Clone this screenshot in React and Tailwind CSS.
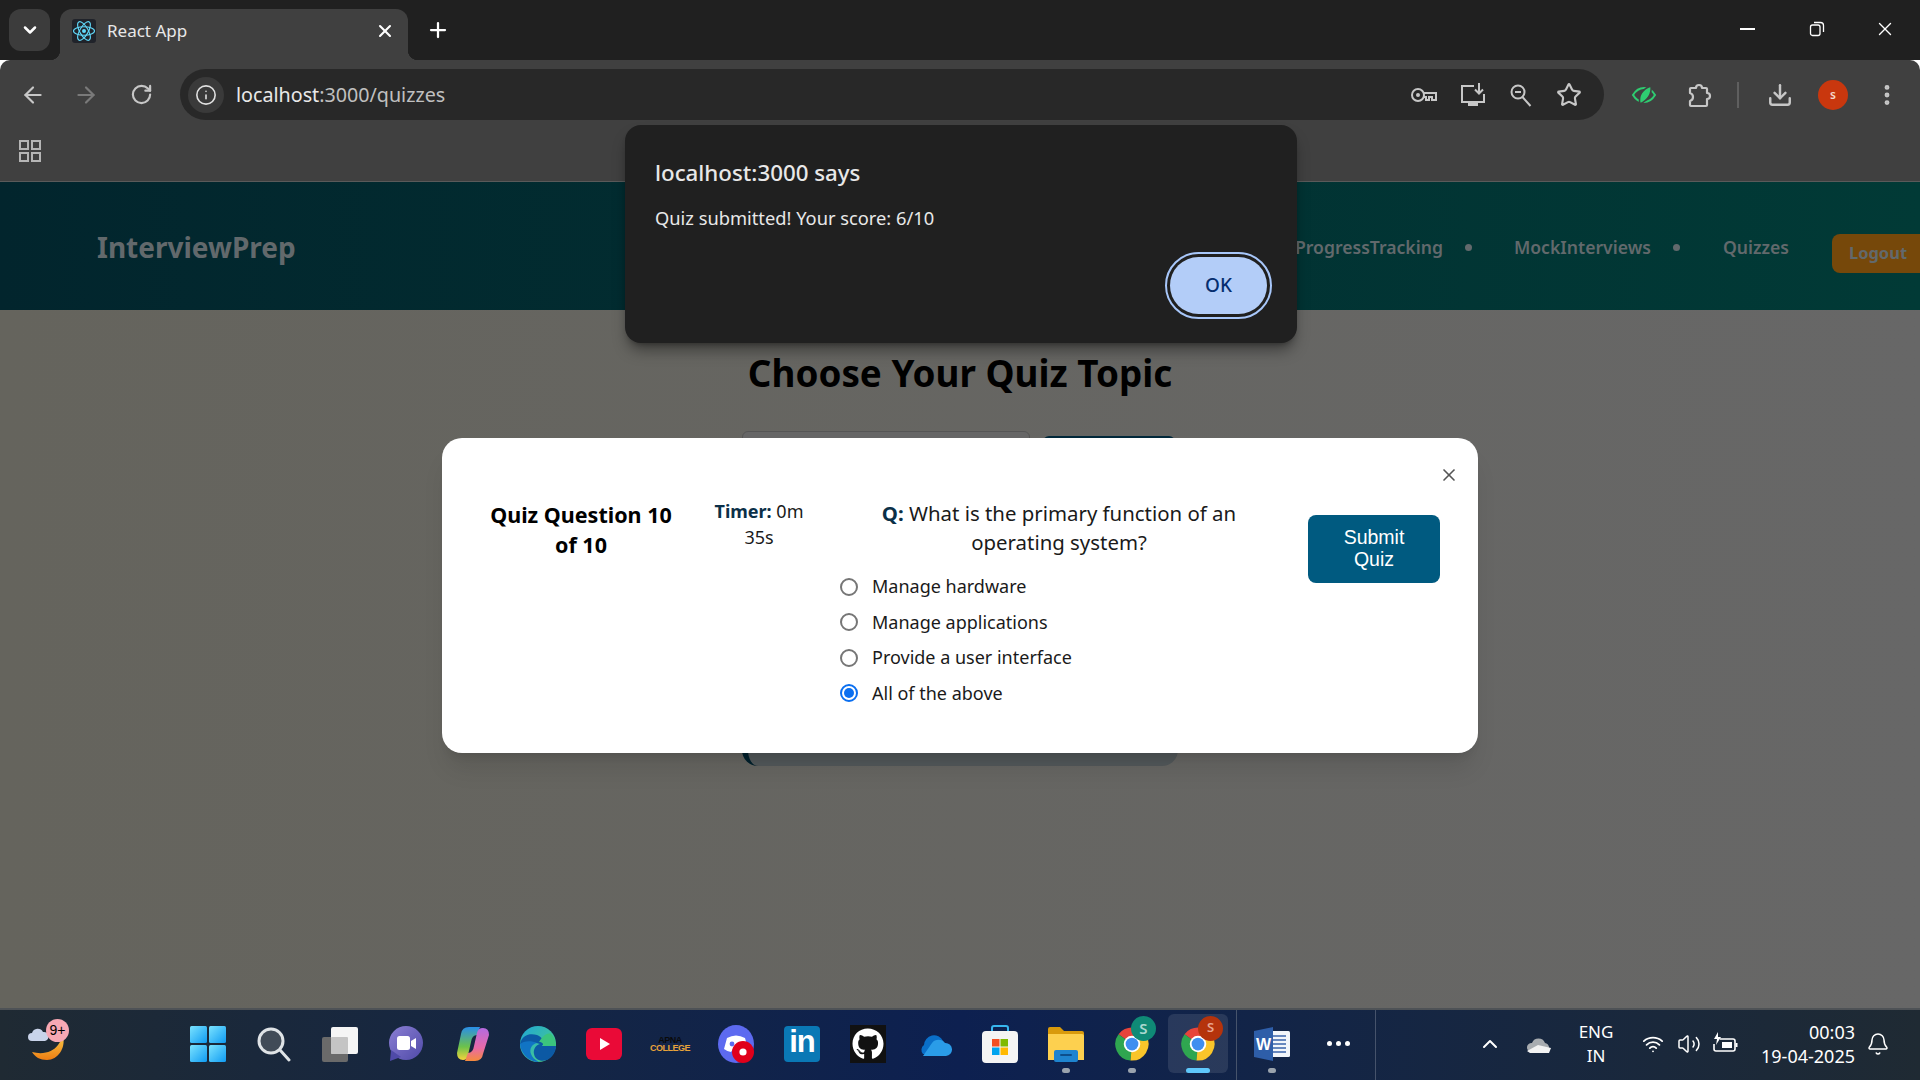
import {
  ArrowLeft,
  ArrowRight,
  Bell,
  ChevronDown,
  ChevronUp,
  Download,
  Info,
  MoreVertical,
  Plus,
  RotateCw,
  Star,
  Volume2,
  Wifi,
  X,
} from "lucide-react";
import { FaGithub } from "react-icons/fa";

function ReactIcon() {
  return (
    <div className="w-6 h-6 bg-[#20232a] rounded-[3px] flex items-center justify-center">
      <svg viewBox="0 0 24 24" className="w-6 h-6" fill="none" stroke="#61dafb" strokeWidth="1.1">
        <ellipse cx="12" cy="12" rx="10.5" ry="4.2" />
        <ellipse cx="12" cy="12" rx="10.5" ry="4.2" transform="rotate(60 12 12)" />
        <ellipse cx="12" cy="12" rx="10.5" ry="4.2" transform="rotate(120 12 12)" />
        <circle cx="12" cy="12" r="2" fill="#61dafb" stroke="none" />
      </svg>
    </div>
  );
}

function KeyIcon() {
  return (
    <svg viewBox="0 0 28 20" className="w-7 h-5" fill="none" stroke="#c7c7c7" strokeWidth="2">
      <circle cx="8" cy="10" r="6" />
      <circle cx="8" cy="10" r="2" fill="#c7c7c7" stroke="none" />
      <path d="M14 8h12v7h-4v-3h-3v3h-3v-3h-2" />
    </svg>
  );
}

function MonitorIcon() {
  return (
    <svg viewBox="0 0 26 26" className="w-[26px] h-[26px]" fill="none" stroke="#c7c7c7" strokeWidth="2">
      <path d="M14 4H2v16h22v-8" />
      <path d="M19 1v10M15 7.5l4 4 4-4" />
      <path d="M8 24h10v-3H8z" fill="#c7c7c7" stroke="none" />
    </svg>
  );
}

function ZoomIcon() {
  return (
    <svg viewBox="0 0 24 24" className="w-6 h-6" fill="none" stroke="#c7c7c7" strokeWidth="2">
      <circle cx="9" cy="9" r="6.5" />
      <path d="M6 9h6M13.5 14l8 9" />
    </svg>
  );
}

function PuzzleIcon() {
  return (
    <svg viewBox="0 0 26 26" className="w-[26px] h-[26px]" fill="none" stroke="#c7c7c7" strokeWidth="2.2" strokeLinejoin="round">
      <path d="M5 6h5a3 3 0 0 1 6 0h4a1 1 0 0 1 1 1v4a3 3 0 0 1 0 6v6a1 1 0 0 1-1 1H5a1 1 0 0 1-1-1v-4q3-1 3-4t-3-4V7a1 1 0 0 1 1-1z" />
    </svg>
  );
}

function EyeLeaf() {
  return (
    <svg viewBox="0 0 26 22" className="w-[26px] h-[22px]" fill="none" stroke="#2ecc71" strokeWidth="2">
      <path d="M2 11c3-5 7-7 11-7s8 2 11 7c-3 5-7 7-11 7S5 16 2 11z" />
      <path d="M9 20C7 12 11 5 20 2c1 8-3 14-11 18z" fill="#2ecc71" stroke="#404040" strokeWidth="1.5" />
    </svg>
  );
}

function RestoreIcon() {
  return (
    <svg viewBox="0 0 16 16" className="w-4 h-4" fill="none" stroke="#fff" strokeWidth="1.3">
      <rect x="1.5" y="4" width="9.5" height="10.5" rx="2" />
      <path d="M5 1.5h6.5a3 3 0 0 1 3 3V11" />
    </svg>
  );
}

function WinIcon() {
  return (
    <svg viewBox="0 0 36 36" className="w-9 h-9">
      <defs>
        <linearGradient id="win" x1="0" y1="0" x2="1" y2="1">
          <stop offset="0" stopColor="#7be3ff" />
          <stop offset="1" stopColor="#0f9bf2" />
        </linearGradient>
      </defs>
      <rect x="0" y="0" width="17" height="17" rx="1.5" fill="url(#win)" />
      <rect x="19" y="0" width="17" height="17" rx="1.5" fill="url(#win)" />
      <rect x="0" y="19" width="17" height="17" rx="1.5" fill="url(#win)" />
      <rect x="19" y="19" width="17" height="17" rx="1.5" fill="url(#win)" />
    </svg>
  );
}

function SearchIcon() {
  return (
    <svg viewBox="0 0 36 36" className="w-9 h-9" fill="#414b57" stroke="#dfe3e6" strokeWidth="3">
      <circle cx="15" cy="15" r="12" />
      <path d="M24 24l9 10" strokeLinecap="round" fill="none" />
    </svg>
  );
}

function TaskViewIcon() {
  return (
    <svg viewBox="0 0 36 36" className="w-9 h-9">
      <rect x="0" y="11" width="26" height="25" rx="2" fill="#6a6a6a" />
      <rect x="9" y="1" width="27" height="27" rx="2" fill="#f5f5f5" />
      <rect x="9" y="11" width="17" height="17" rx="1" fill="#c4c4c4" />
    </svg>
  );
}

function TeamsIcon() {
  return (
    <svg viewBox="0 0 36 36" className="w-9 h-9">
      <defs>
        <linearGradient id="teams" x1="0" y1="0" x2="1" y2="1">
          <stop offset="0" stopColor="#8b7fd4" />
          <stop offset="1" stopColor="#4f4aa8" />
        </linearGradient>
      </defs>
      <circle cx="18" cy="17" r="17" fill="url(#teams)" />
      <path d="M3 24l-1 11 11-4z" fill="#4f4aa8" />
      <rect x="9" y="10" width="13" height="14" rx="2.5" fill="#fff" />
      <path d="M23 15l5-3v11l-5-3z" fill="#fff" />
    </svg>
  );
}

function CopilotIcon() {
  return (
    <svg viewBox="0 0 36 36" className="w-9 h-9">
      <defs>
        <linearGradient id="cop1" x1="0" y1="0" x2="0" y2="1">
          <stop offset="0" stopColor="#2a8ee8" />
          <stop offset="0.6" stopColor="#6cc24a" />
          <stop offset="1" stopColor="#f5d33c" />
        </linearGradient>
        <linearGradient id="cop2" x1="0" y1="0" x2="0" y2="1">
          <stop offset="0" stopColor="#b56ae0" />
          <stop offset="0.6" stopColor="#e86aa8" />
          <stop offset="1" stopColor="#f58b3c" />
        </linearGradient>
      </defs>
      <path d="M7 8Q8 1 15 1h11l-3 8q-5 0-6 7l-3 13q-1 5-5 5-6 0-6-7z" fill="url(#cop1)" />
      <path d="M29 28q-1 7-8 7H11l3-8q5 0 6-7l3-13q1-5 6-5 6 0 6 7z" fill="url(#cop2)" />
    </svg>
  );
}

function EdgeIcon() {
  return (
    <svg viewBox="0 0 36 36" className="w-9 h-9">
      <defs>
        <linearGradient id="edge" x1="0" y1="0" x2="1" y2="1">
          <stop offset="0" stopColor="#1fa6d8" />
          <stop offset="1" stopColor="#51d27a" />
        </linearGradient>
      </defs>
      <circle cx="18" cy="18" r="18" fill="url(#edge)" />
      <path d="M0 18C2 8 11 7 17 9c6 2 8 8 5 11H36c0 6-4 12-9 14-6 2-12 0-13-6-1-5 2-9 6-10-7-3-15 0-20 0z" fill="#0c59a4" />
      <path d="M17 17c-5 1-8 6-6 11 1 3 4 6 8 8C9 36 1 28 0 18c3-3 11-4 17-1z" fill="#1174c4" />
      <path d="M19 16c3 0 5 2 4 4H36c0-5-2-9-5-12-4-2-9 3-12 8z" fill="#3bc47d" />
    </svg>
  );
}

function YoutubeIcon() {
  return (
    <svg viewBox="0 0 36 32" className="w-9 h-8">
      <rect x="0" y="0" width="36" height="32" rx="6" fill="#ea0a37" />
      <path d="M14 10l10 6-10 6z" fill="#fff" />
    </svg>
  );
}

function ApnaIcon() {
  return (
    <div className="flex flex-col items-center font-['Liberation_Sans',sans-serif] font-bold leading-[8px]">
      <span className="text-[9px] text-[#0a0a0a] tracking-[-0.5px]">APNA</span>
      <span className="text-[9px] text-[#e8a33a] tracking-[-0.5px]">COLLEGE</span>
    </div>
  );
}

function DiscordIcon() {
  return (
    <svg viewBox="0 0 36 38" className="w-9 h-[38px]">
      <ellipse cx="18" cy="19" rx="18" ry="19" fill="#5d6af0" />
      <path d="M9 13q9-5 18 0l3 11q-4 3-7 3l-2-3h-6l-2 3q-3 0-7-3z" fill="#fff" />
      <circle cx="14" cy="19" r="2.4" fill="#5d6af0" />
      <circle cx="25" cy="27" r="11" fill="#e0001b" />
      <circle cx="25" cy="27" r="3.6" fill="#fff" />
    </svg>
  );
}

function LinkedinIcon() {
  return (
    <div className="w-9 h-9 rounded-[4px] bg-[#0a78b5] flex items-center justify-center text-white font-bold text-[31px] leading-none font-['Liberation_Sans',sans-serif] tracking-[-1px] pb-1">
      in
    </div>
  );
}

function GithubIcon() {
  return (
    <div className="w-9 h-[38px] bg-[#111] flex items-center justify-center">
      <FaGithub className="w-8 h-8 text-white" />
    </div>
  );
}

function OnedriveIcon() {
  return (
    <svg viewBox="0 0 36 24" className="w-9 h-6">
      <path d="M8 13a10 10 0 0 1 19-4l-13 13H7a6 6 0 0 1 1-9z" fill="#0a6fc9" />
      <path d="M16 11a8 8 0 0 1 13 0 6.5 6.5 0 0 1 1 13H7z" fill="#2a9ce8" />
    </svg>
  );
}

function StoreIcon() {
  return (
    <svg viewBox="0 0 36 38" className="w-9 h-[38px]">
      <path d="M10 7V3q0-2 2-2h12q2 0 2 2v4" fill="none" stroke="#37b6ee" strokeWidth="2" />
      <rect x="0" y="6" width="36" height="32" rx="4" fill="#f4f4f4" />
      <rect x="10" y="14" width="7.5" height="7.5" fill="#f25022" />
      <rect x="18.5" y="14" width="7.5" height="7.5" fill="#7fba00" />
      <rect x="10" y="22.5" width="7.5" height="7.5" fill="#00a4ef" />
      <rect x="18.5" y="22.5" width="7.5" height="7.5" fill="#ffb900" />
    </svg>
  );
}

function FilesIcon() {
  return (
    <svg viewBox="0 0 36 36" className="w-9 h-9">
      <path d="M0 3q0-2 2-2h10l4 4h18q2 0 2 2v3H0z" fill="#d99a0c" />
      <path d="M0 8h34q2 0 2 2v24H0z" fill="#fdd04f" />
      <rect x="6" y="24" width="24" height="12" rx="2" fill="#1e84cf" />
      <rect x="12" y="28" width="12" height="2" rx="1" fill="#0d4f8c" />
    </svg>
  );
}

function ChromeIcon() {
  return (
    <svg viewBox="0 0 48 48" className="w-9 h-9">
      <path d="M24 24L6 11A22 22 0 0 1 43 13z" fill="#e6443b" />
      <path d="M24 24L6 11A22 22 0 0 0 22 46z" fill="#2fa650" />
      <path d="M24 24L43 13A22 22 0 0 1 22 46z" fill="#f9c52a" />
      <circle cx="24" cy="24" r="11" fill="#fff" />
      <circle cx="24" cy="24" r="8.5" fill="#3f8ef0" />
    </svg>
  );
}

function WordIcon() {
  return (
    <svg viewBox="0 0 36 34" className="w-9 h-[34px]">
      <rect x="14" y="4" width="22" height="26" rx="1.5" fill="#f2f5fa" />
      <path d="M19 9h13M19 13h13M19 17h13M19 21h13M19 25h13" stroke="#3a63ab" strokeWidth="1.5" />
      <path d="M0 4L19 0v34L0 30z" fill="#2e5ea9" />
      <text x="2" y="23" fontSize="16" fontWeight="700" fill="#fff" fontFamily="Liberation Sans">W</text>
    </svg>
  );
}

function WeatherIcon() {
  return (
    <div className="relative w-[44px] h-[44px]">
      <svg viewBox="0 0 44 44" className="w-11 h-11">
        <defs>
          <linearGradient id="moon" x1="0" y1="0" x2="0" y2="1">
            <stop offset="0" stopColor="#f7c948" />
            <stop offset="1" stopColor="#ee7d12" />
          </linearGradient>
        </defs>
        <path d="M37 14c3 12-5 24-16 24-7 0-12-3-15-8 11 3 21 0 26-7q3-4 5-9z" fill="url(#moon)" />
        <path d="M6 19a4 4 0 0 1 0-8 6 6 0 0 1 11-1 4.5 4.5 0 0 1 2 9z" fill="#c9d4ea" />
      </svg>
      <div className="absolute left-[20px] top-[-3px] w-[23px] h-[23px] rounded-full bg-[#f7a8b4] flex items-center justify-center text-[14px] text-black font-['Liberation_Sans',sans-serif] leading-none">
        9+
      </div>
    </div>
  );
}

function TrayCloud() {
  return (
    <svg viewBox="0 0 26 18" className="w-[26px] h-[18px]">
      <path d="M6 8a7 7 0 0 1 13 0 5 5 0 0 1 2 9H5a4.5 4.5 0 0 1 1-9z" fill="#a8acb0" />
      <path d="M1 16l11-6 13 3-2 5H4z" fill="#f2f2f2" />
    </svg>
  );
}

function BatteryIcon() {
  return (
    <svg viewBox="0 0 26 24" className="w-[26px] h-6" fill="none" stroke="#fff" strokeWidth="1.6">
      <path d="M8 7h13a2 2 0 0 1 2 2v8a2 2 0 0 1-2 2H4a2 2 0 0 1-2-2v-5" />
      <rect x="10" y="10" width="10" height="6" fill="#fff" stroke="none" />
      <path d="M23.5 11h2v4h-2z" fill="#fff" stroke="none" />
      <path d="M6 0L2 7h3l-1 6 5-8H6z" fill="#fff" stroke="none" />
    </svg>
  );
}

function AppSlot({ children, running, active, badge }) {
  return (
    <div className="relative w-[66px] h-[70px] flex items-center justify-center pb-[3px]">
      {active && <div className="absolute left-[3px] right-[3px] top-[4px] bottom-[7px] rounded-md bg-white/10" />}
      <div className="relative">
        {children}
        {badge}
      </div>
      {running && <div className="absolute bottom-[7px] w-2 h-[5px] rounded-full bg-[#9aa3ad]" />}
      {active && <div className="absolute bottom-[7px] w-6 h-[5px] rounded-full bg-[#5fc8fb]" />}
    </div>
  );
}

function Taskbar() {
  const sBadge = (
    <div className="absolute -right-[6px] -top-[10px] w-[25px] h-[25px] rounded-full bg-[#0f8a76] flex items-center justify-center text-[15px] text-[#a9d8cf] font-semibold">
      S
    </div>
  );
  const redBadge = (
    <div className="absolute -right-[7px] -top-[10px] w-[25px] h-[25px] rounded-full bg-[#b5330c] flex items-center justify-center text-[13px] text-[#e8a590] font-semibold">
      S
    </div>
  );
  return (
    <div className="h-[72px] shrink-0 flex border-t-2 border-[#4e5256] bg-linear-to-r from-[#1f2a33] via-[#0d2050] via-50% to-[#1f2a33] text-white">
      <div className="w-[175px] pl-[26px] pb-[3px] flex items-center">
        <WeatherIcon />
      </div>
      <AppSlot><WinIcon /></AppSlot>
      <AppSlot><SearchIcon /></AppSlot>
      <AppSlot><TaskViewIcon /></AppSlot>
      <AppSlot><TeamsIcon /></AppSlot>
      <AppSlot><CopilotIcon /></AppSlot>
      <AppSlot><EdgeIcon /></AppSlot>
      <AppSlot><YoutubeIcon /></AppSlot>
      <AppSlot><ApnaIcon /></AppSlot>
      <AppSlot><DiscordIcon /></AppSlot>
      <AppSlot><LinkedinIcon /></AppSlot>
      <AppSlot><GithubIcon /></AppSlot>
      <AppSlot><OnedriveIcon /></AppSlot>
      <AppSlot><StoreIcon /></AppSlot>
      <AppSlot running><FilesIcon /></AppSlot>
      <AppSlot running badge={sBadge}><ChromeIcon /></AppSlot>
      <AppSlot active badge={redBadge}><ChromeIcon /></AppSlot>
      <div className="ml-[5px] mr-[2px] w-px bg-[#46536b]" />
      <AppSlot running><WordIcon /></AppSlot>
      <div className="w-[66px] pb-[3px] flex items-center justify-center gap-[4px]">
        <span className="w-[5px] h-[5px] rounded-full bg-white" />
        <span className="w-[5px] h-[5px] rounded-full bg-white" />
        <span className="w-[5px] h-[5px] rounded-full bg-white" />
      </div>
      <div className="ml-[4px] w-px bg-[#46536b]" />
      <div className="ml-auto mr-[19px] flex items-center pb-[2px]">
        <div className="w-[48px] flex justify-center"><ChevronUp className="w-6 h-6" strokeWidth={2} /></div>
        <div className="w-[50px] flex justify-center"><TrayCloud /></div>
        <div className="w-[64px] text-center text-[17px] leading-[24px]">
          <div>ENG</div>
          <div>IN</div>
        </div>
        <div className="w-[50px] flex justify-center"><Wifi className="w-[22px] h-[22px]" /></div>
        <div className="w-[22px] flex justify-center"><Volume2 className="w-6 h-6 shrink-0" strokeWidth={1.5} /></div>
        <div className="w-[50px] flex justify-center"><BatteryIcon /></div>
        <div className="w-[105px] text-right text-[18px] leading-[24px]">
          <div>00:03</div>
          <div>19-04-2025</div>
        </div>
        <div className="w-[46px] flex justify-center"><Bell className="w-6 h-6" strokeWidth={1.5} /></div>
      </div>
    </div>
  );
}

function TabStrip() {
  return (
    <div className="h-[60px] shrink-0 bg-[#202020] flex relative text-white">
      <div className="mt-[9px] ml-[9px] w-[41px] h-[42px] rounded-xl bg-[#3c3c3c] flex items-center justify-center">
        <ChevronDown className="w-5 h-5" strokeWidth={3} />
      </div>
      <div className="relative mt-[9px] ml-[10px] w-[348px] h-[51px] rounded-t-[12px] bg-[#404040] flex items-center pl-[12px] pb-2">
        <div className="absolute -left-[10px] bottom-0 w-[10px] h-[10px] bg-[radial-gradient(circle_at_0_0,#202020_10px,#404040_10.5px)]" />
        <div className="absolute -right-[10px] bottom-0 w-[10px] h-[10px] bg-[radial-gradient(circle_at_100%_0,#202020_10px,#404040_10.5px)]" />
        <ReactIcon />
        <span className="ml-[11px] text-[17px] text-[#e8e8e8]">React App</span>
        <X className="absolute right-[13px] top-[12px] w-5 h-5" strokeWidth={2.5} />
      </div>
      <div className="ml-[18px] mt-[18px] h-6">
        <Plus className="w-6 h-6" strokeWidth={2.25} />
      </div>
      <div className="ml-auto mr-[1px] flex items-start">
        <div className="w-[68px] mr-[2px] h-[58px] flex items-center justify-center"><div className="w-[15px] h-[2px] bg-white" /></div>
        <div className="w-[68px] h-[58px] flex items-center justify-center"><RestoreIcon /></div>
        <div className="w-[68px] h-[58px] flex items-center justify-center"><X className="w-[22px] h-[22px]" strokeWidth={1.5} /></div>
      </div>
    </div>
  );
}

function Toolbar() {
  return (
    <div className="h-[61px] shrink-0 bg-[#404040] rounded-t-[10px] flex items-center text-[#c7c7c7] pt-[8px]">
      <div className="ml-[5px] w-[56px] flex justify-center"><ArrowLeft className="w-[26px] h-[26px]" strokeWidth={2} /></div>
      <div className="w-[50px] flex justify-center"><ArrowRight className="w-[26px] h-[26px] text-[#7a7a7a]" strokeWidth={2} /></div>
      <div className="w-[60px] flex justify-center"><RotateCw className="w-[23px] h-[23px]" strokeWidth={2.25} /></div>
      <div className="ml-[9px] flex-1 h-[51px] rounded-full bg-[#282828] flex items-center pl-[8px] pr-[11px]">
        <div className="w-[36px] h-[36px] rounded-full bg-[#3a3a3a] flex items-center justify-center">
          <Info className="w-[22px] h-[22px] text-[#e0e0e0]" strokeWidth={1.75} />
        </div>
        <span className="ml-[12px] text-[19.7px] text-[#e8e8e8]">
          localhost<span className="text-[#c0c0c0]">:3000/quizzes</span>
        </span>
        <div className="ml-auto flex items-center">
          <div className="w-[48px] flex justify-center"><KeyIcon /></div>
          <div className="w-[49px] flex justify-center"><MonitorIcon /></div>
          <div className="w-[48px] flex justify-center"><ZoomIcon /></div>
          <div className="w-[48px] flex justify-center"><Star className="w-[26px] h-[26px]" strokeWidth={2} /></div>
        </div>
      </div>
      <div className="w-[80px] flex justify-center"><EyeLeaf /></div>
      <div className="w-[30px] flex justify-center"><PuzzleIcon /></div>
      <div className="w-[48px] flex justify-center"><div className="w-[2px] h-[26px] bg-[#5f5f5f]" /></div>
      <div className="w-[36px] flex justify-center"><Download className="w-[26px] h-[26px] shrink-0" strokeWidth={2.25} /></div>
      <div className="w-[70px] flex justify-center">
        <div className="w-[30px] h-[30px] rounded-full bg-[#c9370e] flex items-center justify-center text-[12px] text-[#f6d7cc] font-semibold">s</div>
      </div>
      <div className="w-[38px] mr-[14px] flex justify-center"><MoreVertical className="w-[26px] h-[26px]" strokeWidth={2.5} /></div>
    </div>
  );
}

function BookmarksBar() {
  return (
    <div className="h-[61px] shrink-0 bg-[#404040] border-b border-[#5a5a5a] flex items-center pl-[19px] pb-[1px]">
      <svg viewBox="0 0 22 22" className="w-[22px] h-[22px]" fill="none" stroke="#b5b5b5" strokeWidth="2">
        <rect x="1" y="1" width="8" height="8" />
        <rect x="13" y="1" width="8" height="8" />
        <rect x="1" y="13" width="8" height="8" />
        <rect x="13" y="13" width="8" height="8" />
      </svg>
    </div>
  );
}

function NavBar() {
  return (
    <div className="h-[128px] shrink-0 bg-linear-to-r from-[#02252d] to-[#013a36] flex items-center pl-[97px] pt-[2px] overflow-hidden text-[#62696c]">
      <span className="text-[28px] font-bold">InterviewPrep</span>
      <div className="ml-auto flex items-center text-[17.6px] font-semibold pt-[1px]">
        <span>ProgressTracking</span>
        <span className="w-[71px] pl-[22px] flex"><i className="block w-[7px] h-[7px] rounded-full bg-[#62696c]" /></span>
        <span>MockInterviews</span>
        <span className="w-[72px] pl-[22px] flex"><i className="block w-[7px] h-[7px] rounded-full bg-[#62696c]" /></span>
        <span>Quizzes</span>
        <div className="ml-[43px] mt-[12px] w-[88px] h-[39px] rounded-l-lg bg-[#76480a] flex items-center justify-center pl-1 text-[16.5px] font-bold">
          Logout
        </div>
      </div>
    </div>
  );
}

function QuizPage() {
  return (
    <div className="flex-1 bg-linear-to-r from-[#65645d] to-[#676767] flex flex-col items-center min-h-0">
      <h1 className="mt-[37px] h-[52px] text-[36.8px] leading-[52px] font-bold text-black">Choose Your Quiz Topic</h1>
      <div className="mt-[32px] w-[436px] flex gap-[13px] items-start">
        <div className="w-[288px] h-[40px] rounded-md border border-[#555] bg-[#666]" />
        <div className="mt-[5px] w-[132px] h-[36px] rounded-md bg-[#01283a]" />
      </div>
      <div className="mt-[254px] w-[436px] h-[40px] rounded-2xl border-l-[6px] border-[#01202c] bg-[#52585a]" />
    </div>
  );
}

const options = ["Manage hardware", "Manage applications", "Provide a user interface", "All of the above"];

function QuizModal() {
  return (
    <div className="absolute left-[442px] top-[438px] w-[1036px] h-[315px] rounded-[20px] bg-white shadow-xl flex items-start text-[#1a1a1a]">
      <X className="absolute right-[19px] top-[27px] w-5 h-5 text-[#555]" strokeWidth={2} />
      <div className="ml-[40px] mt-[62px] w-[198px] text-center text-[21.5px] leading-[30px] font-bold text-black">
        <div>Quiz Question 10</div>
        <div>of 10</div>
      </div>
      <div className="ml-[30px] mt-[60px] w-[98px] text-center text-[18px] leading-[26px]">
        <div><b className="text-[#0b3048]">Timer:</b> 0m</div>
        <div>35s</div>
      </div>
      <div className="ml-[41px] mt-[61px] w-[420px]">
        <div className="text-center text-[20.4px] leading-[29px]">
          <div><b className="text-[#0b3048]">Q:</b> What is the primary function of an</div>
          <div>operating system?</div>
        </div>
        <div className="mt-[12px] ml-[-9px] flex flex-col">
          {options.map((o, i) => (
            <div key={o} className="h-[35.5px] flex items-center text-[18px]">
              <div className={`w-[18px] h-[18px] rounded-full border-2 flex items-center justify-center ${i === 3 ? "border-[#0b6ff0]" : "border-[#767676]"}`}>
                {i === 3 && <div className="w-[10px] h-[10px] rounded-full bg-[#0b6ff0]" />}
              </div>
              <span className="ml-[14px]">{o}</span>
            </div>
          ))}
        </div>
      </div>
      <div className="ml-[39px] mt-[77px] w-[132px] h-[68px] pb-[2px] rounded-lg bg-[#005a80] flex items-center justify-center text-center text-white text-[19.5px] leading-[22px] font-['Liberation_Sans',sans-serif] px-4">
        Submit Quiz
      </div>
    </div>
  );
}

function AlertDialog() {
  return (
    <div className="absolute left-[625px] top-[125px] w-[672px] h-[218px] rounded-2xl bg-[#202020] shadow-lg shadow-black/40 pl-[30px] pt-[32px] text-[#e8e8e8]">
      <div className="text-[22.3px] leading-[32px] font-medium">localhost:3000 says</div>
      <div className="mt-[17px] text-[18.3px] leading-6">Quiz submitted! Your score: 6/10</div>
      <div className="absolute right-[25px] top-[127px] w-[107px] h-[67px] rounded-full border-[2px] border-[#a8c7fa] p-[3px] bg-[#202020]">
        <div className="w-full h-full rounded-full bg-[#b3cdf8] flex items-center justify-center text-[19px] font-medium text-[#062e6f]">
          OK
        </div>
      </div>
    </div>
  );
}

export default function App() {
  return (
    <div className="relative w-[1920px] h-[1080px] overflow-hidden flex flex-col font-['Noto_Sans',sans-serif]">
      <TabStrip />
      <Toolbar />
      <BookmarksBar />
      <NavBar />
      <QuizPage />
      <Taskbar />
      <QuizModal />
      <AlertDialog />
    </div>
  );
}
